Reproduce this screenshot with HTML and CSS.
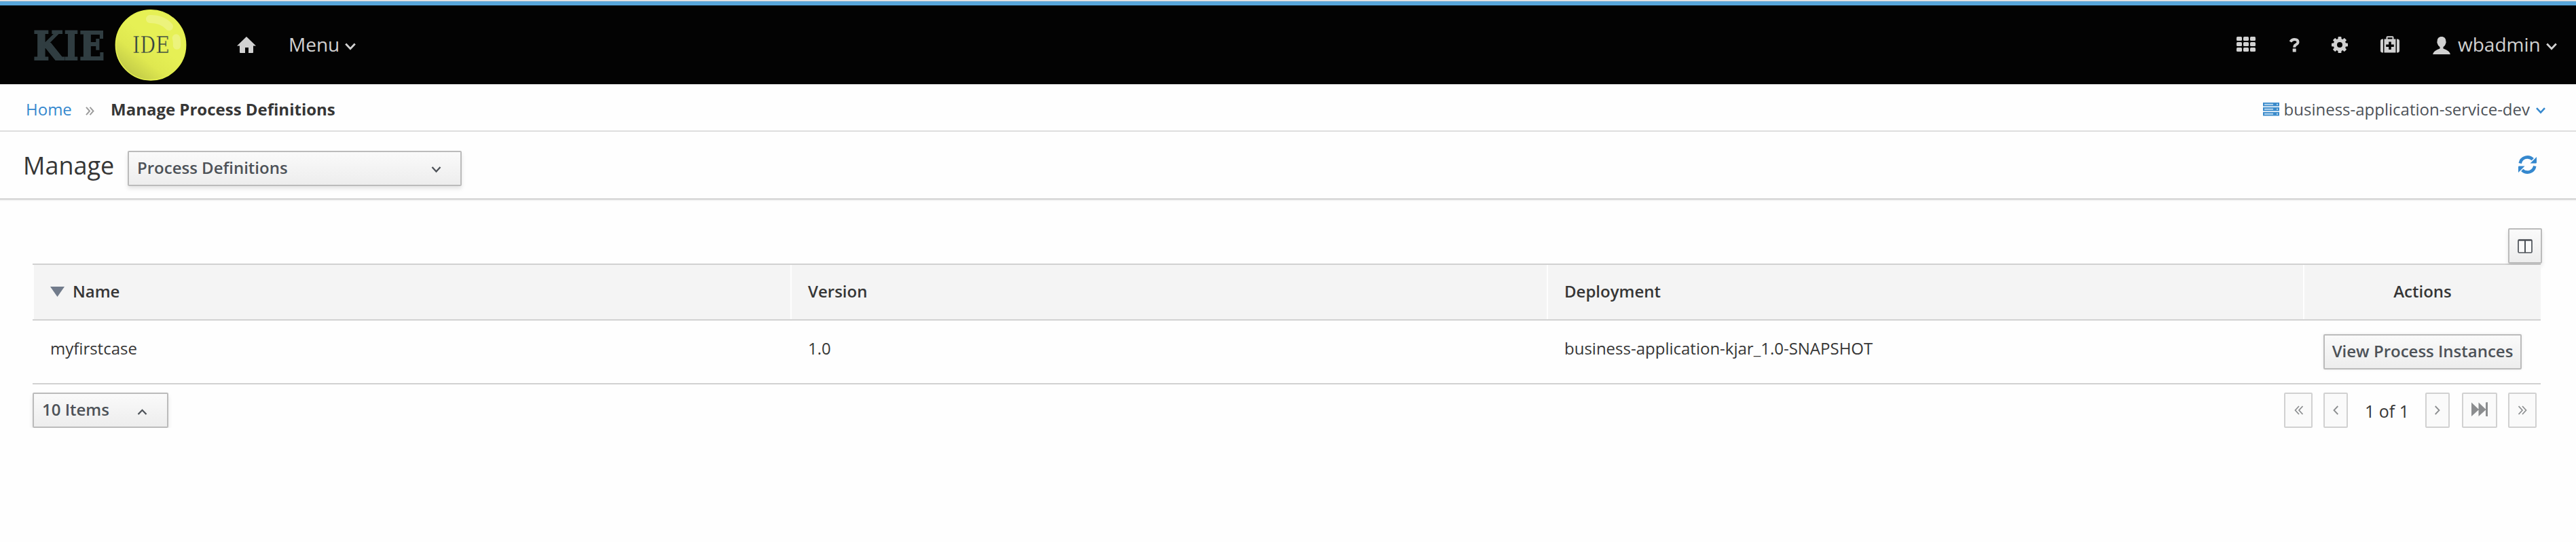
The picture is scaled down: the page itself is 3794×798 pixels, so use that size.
FILE: index.html
```html
<!DOCTYPE html>
<html lang="en">
<head>
<meta charset="utf-8">
<title>Manage Process Definitions</title>
<link rel="stylesheet" href="styles.css">
</head>
<body>
<header class="navbar">
  <svg class="logo" width="240" height="116" viewBox="40 8 240 116">
    <defs>
      <linearGradient id="ball" x1="0.2" y1="0.9" x2="0.55" y2="0.45">
        <stop offset="0" stop-color="#c3cc48"/>
        <stop offset="0.5" stop-color="#dfe850"/>
        <stop offset="1" stop-color="#e6f055"/>
      </linearGradient>
    </defs>
    <text class="logo-kie" y="87.500"><tspan x="49" textLength="44" lengthAdjust="spacingAndGlyphs">K</tspan><tspan x="94.500" textLength="21" lengthAdjust="spacingAndGlyphs">I</tspan><tspan x="117" textLength="37" lengthAdjust="spacingAndGlyphs">E</tspan></text>
    <circle cx="222" cy="66.300" r="51.600" fill="url(#ball)" stroke="#e4f04e" stroke-width="1.600"/>
    <path d="M221 28 Q239 28 249 39" fill="none" stroke="#ecf37c" stroke-width="12" stroke-linecap="round"/>
    <path d="M259.500 56 Q261 61 260.500 67" fill="none" stroke="#ecf37c" stroke-width="11.500" stroke-linecap="round"/>
    <text class="logo-ide" x="195" y="78" textLength="55" lengthAdjust="spacingAndGlyphs">IDE</text>
  </svg>
  <svg class="home" width="28" height="24" viewBox="0 0 28 24"><path d="M14 0 28 13.500H24V23q0 1-1 1H17V16H12V24H5q-1 0-1-1V13.500H0Z" fill="#d1d1d1"/></svg>
  <a class="menu">Menu</a>
  <svg class="menu-caret" width="16" height="11" viewBox="0 0 16 11"><path d="M1.200 1.500 8 8.800 14.800 1.500" fill="none" stroke="#d1d1d1" stroke-width="2.800"/></svg>
  <nav class="utility">
    <svg class="i-grid" width="28" height="22" viewBox="0 0 28 22" fill="#d1d1d1">
      <rect width="8" height="6" rx="1.500"/><rect x="10" width="8" height="6" rx="1.500"/><rect x="20" width="8" height="6" rx="1.500"/>
      <rect y="8" width="8" height="6" rx="1.500"/><rect x="10" y="8" width="8" height="6" rx="1.500"/><rect x="20" y="8" width="8" height="6" rx="1.500"/>
      <rect y="16" width="8" height="6" rx="1.500"/><rect x="10" y="16" width="8" height="6" rx="1.500"/><rect x="20" y="16" width="8" height="6" rx="1.500"/>
    </svg>
    <svg class="i-help" width="15" height="21" viewBox="0 0 15 21"><path d="M1.400 5.500Q3.500 2 7.300 2Q12.500 2 12.500 6Q12.500 8 9.500 9.800Q7.200 11 7.200 13.800" fill="none" stroke="#d1d1d1" stroke-width="4"/><rect x="4.700" y="15.600" width="5" height="5" rx=".6" fill="#d1d1d1"/></svg>
    <svg class="i-gear" width="24" height="24" viewBox="-12 -12 24 24">
      <g fill="#d1d1d1"><rect x="-2.500" y="-12" width="5" height="24" rx="1"/><rect x="-2.500" y="-12" width="5" height="24" rx="1" transform="rotate(45)"/><rect x="-2.500" y="-12" width="5" height="24" rx="1" transform="rotate(90)"/><rect x="-2.500" y="-12" width="5" height="24" rx="1" transform="rotate(135)"/><circle r="9.300"/></g>
      <circle r="4" fill="#030303"/>
    </svg>
    <svg class="i-kit" width="28" height="25" viewBox="0 0 28 25">
      <path d="M9.500 5V2Q9.500 1.200 10.300 1.200H17.700Q18.500 1.200 18.500 2V5" fill="none" stroke="#d1d1d1" stroke-width="2"/>
      <path d="M4 4.500V24.500H3Q0 24.500 0 21.500V7.500Q0 4.500 3 4.500ZM24 4.500V24.500H25Q28 24.500 28 21.500V7.500Q28 4.500 25 4.500Z" fill="#d1d1d1"/>
      <path d="M5.500 4.500H22.500V24.500H5.500Z" fill="#d1d1d1"/>
      <path d="M12.200 8.500h3.600v4h4v3.600h-4v4h-3.600v-4h-4v-3.600h4Z" fill="#030303"/>
    </svg>
    <svg class="i-user" width="26" height="26" viewBox="0 0 26 26"><path d="M13 0C17 0 19.300 2.500 19.300 6.500Q20.300 7.500 19 10.500Q18 14 15.500 15.300V17.500Q25 20.500 26 26H0Q1 20.500 10.500 17.500V15.300Q8 14 7 10.500Q5.700 7.500 6.700 6.500C6.700 2.500 9 0 13 0Z" fill="#d1d1d1"/></svg>
    <span class="username">wbadmin</span>
    <svg class="user-caret" width="16" height="11" viewBox="0 0 16 11"><path d="M1.200 1.500 8 8.800 14.800 1.500" fill="none" stroke="#d1d1d1" stroke-width="2.800"/></svg>
  </nav>
</header>

<section class="crumbs">
  <a class="crumb-home">Home</a>
  <svg class="crumb-sep" width="13" height="13" viewBox="0 0 13 13"><path d="M1 .8 6 6.500 1 12.200M6.500 .8 11.500 6.500 6.500 12.200" fill="none" stroke="#9c9c9c" stroke-width="2"/></svg>
  <strong class="crumb-here">Manage Process Definitions</strong>
  <div class="server">
    <svg width="24" height="20" viewBox="0 0 24 20">
      <g fill="#3b8bcb"><rect width="24" height="5.500"/><rect y="7" width="24" height="5.500"/><rect y="14" width="24" height="5.500"/></g>
      <g fill="#b5d6ef"><rect x="2" y="1.800" width="13" height="2"/><rect x="2" y="8.800" width="13" height="2"/><rect x="2" y="15.800" width="13" height="2"/><rect x="20" y="1.800" width="2" height="2"/><rect x="20" y="8.800" width="2" height="2"/><rect x="20" y="15.800" width="2" height="2"/></g>
    </svg>
    <span class="server-name">business-application-service-dev</span>
    <svg class="server-caret" width="14" height="10" viewBox="0 0 14 10"><path d="M1 1.200 7 7.700 13 1.200" fill="none" stroke="#3588ce" stroke-width="2.500"/></svg>
  </div>
</section>

<section class="toolbar">
  <h1 class="title">Manage</h1>
  <button class="btn select"><span>Process Definitions</span>
    <svg width="15" height="10" viewBox="0 0 15 10"><path d="M1.500 1 7.500 7.500 13.500 1" fill="none" stroke="#4d5258" stroke-width="2.300"/></svg>
  </button>
  <svg class="refresh" width="27" height="27" viewBox="0 0 27 27">
    <path d="M2.700 11.500A11 11 0 0 1 21.300 5.700M24.300 15.500A11 11 0 0 1 5.700 21.300" fill="none" stroke="#3588ce" stroke-width="4.500"/>
    <path d="M27 2V10.300Q27 11.500 25.800 11.500H17.500ZM0 25V16.700Q0 15.500 1.200 15.500H9.500Z" fill="#3588ce"/>
  </svg>
</section>

<main class="content">
  <div class="grid-tools">
    <button class="btn columns">
      <svg width="22" height="21" viewBox="0 0 22 21"><rect x="1" y="1" width="20" height="19" rx="1.500" fill="#fafafa" stroke="#4d5258" stroke-width="1.700"/><path d="M1 1.700H21M11 1V20" stroke="#4d5258" stroke-width="2" /></svg>
    </button>
  </div>
  <div class="table">
    <div class="row head">
      <div class="cell"><svg class="sort" width="21" height="15" viewBox="0 0 21 15"><path d="M0 0H21L10.500 15Z" fill="#717b8b"/></svg>Name</div>
      <div class="cell">Version</div>
      <div class="cell">Deployment</div>
      <div class="cell center">Actions</div>
    </div>
    <div class="row body">
      <div class="cell">myfirstcase</div>
      <div class="cell">1.0</div>
      <div class="cell">business-application-kjar_1.0-SNAPSHOT</div>
      <div class="cell center"><button class="btn view">View Process Instances</button></div>
    </div>
  </div>
  <footer class="pager">
    <button class="btn items"><span>10 Items</span>
      <svg width="15" height="9" viewBox="0 0 15 9"><path d="M1.500 8 7.500 1.800 13.500 8" fill="none" stroke="#4d5258" stroke-width="2.300"/></svg>
    </button>
    <button class="page first"><svg width="13" height="14" viewBox="0 0 13 14"><path d="M7 1 1.500 7 7 13M12.500 1 7 7 12.500 13" fill="none" stroke="#8b8d8f" stroke-width="1.700"/></svg></button>
    <button class="page prev"><svg width="8" height="14" viewBox="0 0 8 14"><path d="M7.300 1 1.500 7 7.300 13" fill="none" stroke="#8b8d8f" stroke-width="1.800"/></svg></button>
    <span class="range">1 of 1</span>
    <button class="page next"><svg width="8" height="14" viewBox="0 0 8 14"><path d="M.7 1 6.500 7 .7 13" fill="none" stroke="#8b8d8f" stroke-width="1.800"/></svg></button>
    <button class="page skip"><svg width="24" height="22" viewBox="0 0 24 22"><path d="M0 .5 10.500 10.500V.5L21 10.500V1.200Q21 .2 22 .2H24V21H22Q21 21 21 20V11.500L10.500 21V11.500L0 21Z" fill="#8b8d8f"/></svg></button>
    <button class="page last"><svg width="13" height="14" viewBox="0 0 13 14"><path d="M.5 1 6 7 .5 13M6 1 11.500 7 6 13" fill="none" stroke="#8b8d8f" stroke-width="1.700"/></svg></button>
  </footer>
</main>
</body>
</html>
```
FILE: styles.css
```css
* { box-sizing: border-box; }

body {
  margin: 0;
  background: #fefefe;
  color: #363636;
  font: 24px/32px "Open Sans", sans-serif;
  overflow: hidden;
}

svg { display: block; flex: none; }

.navbar {
  height: 124px;
  padding-left: 40px;
  border-top: 8px solid #58a6da;
  border-image: linear-gradient(#eee 0 1px, #ccc 1px 2px, #58a6da 2px) 8 0 0 0;
  background: #030303;
  display: flex;
  align-items: flex-start;
  color: #d1d1d1;
  font-size: 28px;
  line-height: 38px;
}
.logo-kie { font: bold 58px "DejaVu Serif", serif; fill: #303d41; stroke: #303d41; stroke-width: 2.2px; }
.logo-ide { font: 33px "DejaVu Serif", serif; fill: #303d41; stroke: #e5ef54; stroke-width: .5px; }
.home { margin: 46px 0 0 69px; }
.menu { margin: 38px 0 0 48px; width: 76px; }
.menu-caret { margin: 55px 0 0 7px; }
.utility { margin-left: auto; padding-right: 28px; display: flex; align-items: flex-start; }
.i-grid { margin-top: 46px; }
.i-help { margin: 48px 0 0 50px; }
.i-gear { margin: 46px 0 0 47px; }
.i-kit { margin: 45px 0 0 48px; }
.i-user { margin: 46px 0 0 49px; }
.username { margin: 38px 0 0 11px; width: 123px; }
.user-caret { margin: 55px 0 0 7px; }

.crumbs {
  height: 70px;
  padding: 6px 45px 0 38px;
  border-bottom: 2px solid #dedede;
  display: flex;
  align-items: center;
}
.crumb-home { width: 67px; color: #3588ce; }
.crumb-sep { margin: 4px 24px 0 21px; }
.crumb-here { font-weight: 700; }
.server { margin-left: auto; display: flex; align-items: center; color: #4d5258; }
.server svg { margin-top: -1px; }
.server-name { margin-left: 6.5px; }
.server .server-caret { margin: 3px 0 0 9px; }

.toolbar {
  height: 102px;
  padding: 28px 58px 0 34px;
  border-bottom: 2px solid #f3f3f3;
  box-shadow: inset 0 -2px #d1d1d1;
  display: flex;
  align-items: flex-start;
}
.title { margin: -5px 0 0; width: 154px; font-size: 36px; line-height: 54px; font-weight: 400; }
.refresh { margin: 7px 0 0 auto; }

.btn {
  height: 52px;
  margin: 0;
  padding: 0;
  border: 2px solid #bbb;
  border-radius: 2px;
  background: linear-gradient(#fafafa, #ededed);
  box-shadow: 0 4px 6px rgba(3, 3, 3, .1);
  color: #4d5258;
  font: 600 24px/32px "Open Sans", sans-serif;
  display: flex;
  align-items: center;
  white-space: nowrap;
}
.btn span { margin-top: -3px; }
.select { width: 492px; padding: 0 28px 0 12px; justify-content: space-between; }
.select svg { margin-top: 4px; }

.content { padding: 40px 50px 0 48px; }
.grid-tools { display: flex; justify-content: flex-end; }
.columns { width: 50px; justify-content: center; }

.table { width: 3694px; border-top: 2px solid #d1d1d1; }
.row { display: grid; grid-template-columns: 1116px 1114px 1114px 350px; border-bottom: 2px solid #d1d1d1; }
.head { height: 82px; font-weight: 600; }
.head .cell { background: #f4f4f4; border-left: 2px solid #fefefe; display: flex; align-items: center; padding: 0 0 3px 24px; }
.head .center { padding-left: 0; justify-content: center; }
.head .cell.center { padding-left: 0; }
.sort { margin: 1px 12px 0 0; }
.body { height: 94px; }
.body .cell { padding: 25px 0 0 26px; }
.body .center { padding: 20px 0 0 30px; }
.view { width: 292px; justify-content: center; padding-bottom: 2px; box-shadow: 0 0 4px rgba(3, 3, 3, .08); }

.pager { padding: 12px 8px 0 0; display: flex; align-items: center; }
.items { width: 200px; padding: 0 29px 0 12px; justify-content: space-between; margin-right: auto; }
.items svg { margin-top: 5px; }
.page {
  height: 52px;
  margin: 0;
  padding: 0;
  border: 2px solid #d1d1d1;
  border-radius: 2px;
  background: #fafafa;
  display: flex;
  align-items: center;
  justify-content: center;
}
.first, .last { width: 42px; }
.prev { width: 36px; margin-left: 16px; }
.range { width: 114px; padding: 1px 0 0 1px; text-align: center; font-size: 25px; }
.next { width: 36px; }
.skip { width: 52px; margin: 0 16px 0 18px; }
.skip svg { margin-top: -2px; }
```
